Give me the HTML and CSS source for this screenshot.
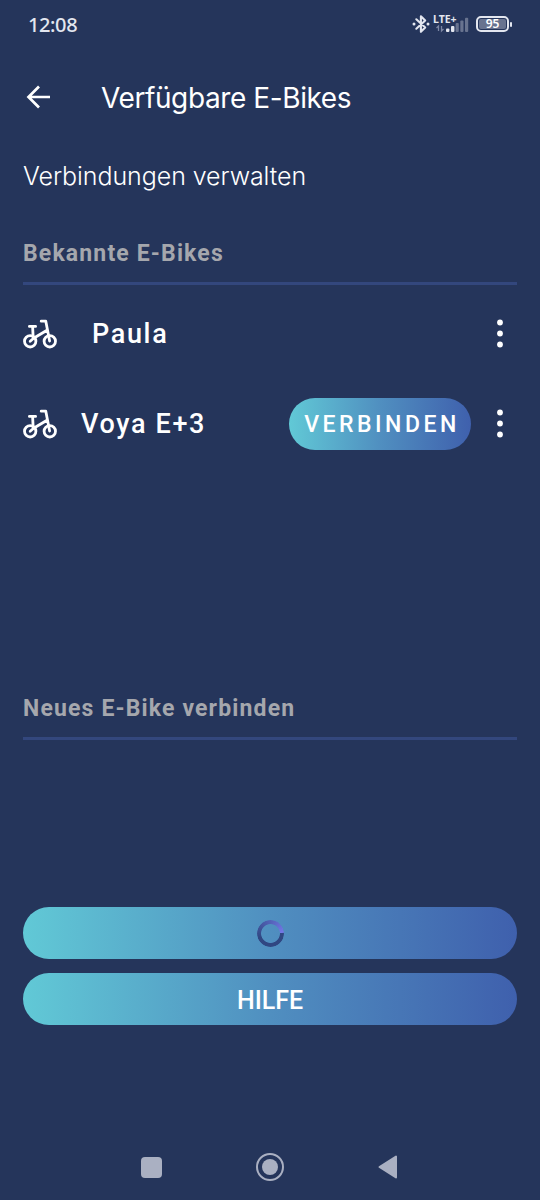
FILE: index.html
```html
<!DOCTYPE html>
<html lang="de">
<head>
<meta charset="utf-8">
<title>Verfügbare E-Bikes</title>
<link rel="stylesheet" href="styles.css">
</head>
<body>
<svg width="0" height="0" class="defs">
  <symbol id="bike" viewBox="0 0 34 30">
    <g fill="none" stroke="#fff" stroke-width="2.8" stroke-linecap="round" stroke-linejoin="round">
      <circle cx="7.2" cy="22.3" r="5.7"/><circle cx="26.8" cy="22.3" r="5.7"/>
      <path d="M18.2 2.2h4.6L24.5 11l2.1 11M6.4 7.4h6.2M9.6 7.4l.6 12M7.2 22.3l3.4-3L24 11.2"/>
    </g>
  </symbol>
  <symbol id="dots" viewBox="0 0 6 30">
    <g fill="#fff"><circle cx="3" cy="3.5" r="2.9"/><circle cx="3" cy="14.5" r="2.9"/><circle cx="3" cy="25.5" r="2.9"/></g>
  </symbol>
</svg>
<div class="screen">
  <div class="status">
    <span class="clock">12:08</span>
    <svg class="bt" width="18" height="20" viewBox="0 0 18 20"><path d="M4.3 5.3l8.9 8.2-4.3 4.3V2.2l4.3 4.3-8.9 8.2" fill="none" stroke="#e3e6ef" stroke-width="2.1" stroke-linejoin="round" stroke-linecap="round"/><circle cx="2" cy="10" r="1.5" fill="#e3e6ef"/><circle cx="16" cy="10" r="1.5" fill="#e3e6ef"/></svg>
    <div class="signal">
      <span class="lte">LTE+</span>
      <svg width="37" height="20" viewBox="0 0 37 20"><path d="M5.5 17v-5l-2 2M8.5 12v5l2-2" fill="none" stroke="#7c86a3" stroke-width="1.3"/><g fill="#e3e6ef"><rect x="13" y="14.5" width="3.4" height="3.5" rx="1"/><rect x="18" y="12" width="3.4" height="6" rx="1"/></g><g fill="#68738f"><rect x="22.6" y="9" width="3.2" height="9" rx="1"/><rect x="27.3" y="6.5" width="3.2" height="11.5" rx="1"/><rect x="32" y="3.7" width="3.2" height="14.3" rx="1"/></g></svg>
    </div>
    <div class="battery"><span class="level">95</span></div><i class="tip"></i>
  </div>
  <header class="bar">
    <svg width="26" height="26" viewBox="0 0 26 26"><path d="M24 13H3M13 2.5L2.5 13 13 23.5" fill="none" stroke="#fff" stroke-width="2.7"/></svg>
    <h1 class="title">Verfügbare E-Bikes</h1>
  </header>
  <main class="content">
    <p class="subtitle">Verbindungen verwalten</p>
    <section class="known">
      <h2 class="label">Bekannte E-Bikes</h2>
      <div class="row"><svg class="bike"><use href="#bike"/></svg><span class="name paula">Paula</span><svg class="dots"><use href="#dots"/></svg></div>
      <div class="row"><svg class="bike"><use href="#bike"/></svg><span class="name voya">Voya E+3</span><button class="pill connect">VERBINDEN</button><svg class="dots"><use href="#dots"/></svg></div>
    </section>
    <section class="fresh">
      <h2 class="label">Neues E-Bike verbinden</h2>
    </section>
    <button class="pill wide"><span class="spinner"></span></button>
    <button class="pill wide help">HILFE</button>
  </main>
  <nav class="nav">
    <span class="recent"></span>
    <span class="home"><i></i></span>
    <svg width="20" height="24" viewBox="0 0 20 24"><path d="M1.5 12L18 1.5v21z" fill="#aab0c2" stroke="#aab0c2" stroke-width="2" stroke-linejoin="round"/></svg>
  </nav>
</div>
</body>
</html>
```
FILE: styles.css
```css
* { box-sizing: border-box; }
body { margin: 0; background: #25355b; color: #fff; font-family: Roboto, sans-serif; }
.defs { position: absolute; }
.screen { width: 540px; height: 1200px; display: flex; flex-direction: column; overflow: hidden; }
svg { display: block; flex: none; }
.status { height: 48px; display: flex; align-items: center; padding: 0 28px; color: #e3e6ef; }
.clock { font: 500 20px/24px "Noto Sans", sans-serif; letter-spacing: -0.4px; width: 384px; padding-top: 1px; white-space: nowrap; }
.signal { width: 37px; height: 20px; margin-left: 3px; position: relative; }
.lte { position: absolute; left: 0; top: -1px; font: 700 10.5px/12px "Noto Sans", sans-serif; }
.battery { flex: none; width: 33px; height: 16px; margin-left: 6px; border: 2px solid #e3e6ef; border-radius: 5px; padding: 1px; }
.level { display: block; height: 10px; border-radius: 2px; background: #68738f; color: #fff; text-align: center; font: 600 12px/10px "Noto Sans", sans-serif; }
.tip { flex: none; width: 2px; height: 5px; margin-left: 1px; background: #e3e6ef; border-radius: 1px; }
.bar { height: 98px; display: flex; align-items: center; padding: 0 0 0 26px; }
.title { margin: 2px 0 0 49px; font: 400 28px/36px Inter, sans-serif; letter-spacing: -0.4px; white-space: nowrap; }
.content { display: flex; flex-direction: column; padding: 0 23px; }
.subtitle { margin: 13px 0 1px; font: 350 25px/34px Inter, sans-serif; letter-spacing: -0.07px; height: 34px; white-space: nowrap; }
.known { height: 455px; margin-top: 43px; }
.label { margin: 0; height: 48px; padding-top: 1px; border-bottom: 3px solid #33477d; color: #a5a7ad; font: 700 23px/32px Roboto, sans-serif; letter-spacing: 1.15px; }
.row { height: 90px; display: flex; align-items: center; padding-top: 7px; }
.bike { width: 34px; height: 30px; }
.name { font-size: 27px; font-weight: 500; line-height: 34px; letter-spacing: 1.65px; white-space: nowrap; }
.paula { margin-left: 35px; }
.voya { margin-left: 24px; }
.dots { width: 6px; height: 30px; margin: 0 14px 0 auto; }
.pill { border: 0; padding: 0; display: flex; align-items: center; justify-content: center; height: 52px; border-radius: 26px; background: linear-gradient(90deg, #61c9d6, #508fc0 50%, #3f60ad); color: #fff; font: 500 25px/30px Roboto, sans-serif; }
.connect { width: 182px; margin-left: auto; font-size: 23px; letter-spacing: 3.5px; padding: 2px 0 0 4px; }
.connect + .dots { margin-left: 26px; }
.fresh { height: 215px; }
.wide { width: 494px; margin-bottom: 14px; }
.help { padding-top: 4px; }
.spinner { width: 27px; height: 27px; border-radius: 50%; background: conic-gradient(#5362b8, #7378e6 85deg, #304782 90deg, #304782 250deg, #5362b8); mask: radial-gradient(circle, transparent 9px, #000 9.8px); }
.nav { height: 66px; margin-top: auto; display: flex; align-items: center; padding-left: 141px; }
.recent { width: 21px; height: 21px; border-radius: 4px; background: #aab0c2; }
.home { width: 28px; height: 28px; border: 2px solid #aab0c2; border-radius: 50%; display: flex; align-items: center; justify-content: center; margin: 0 94px; }
.home i { width: 16px; height: 16px; border-radius: 50%; background: #aab0c2; }
```
